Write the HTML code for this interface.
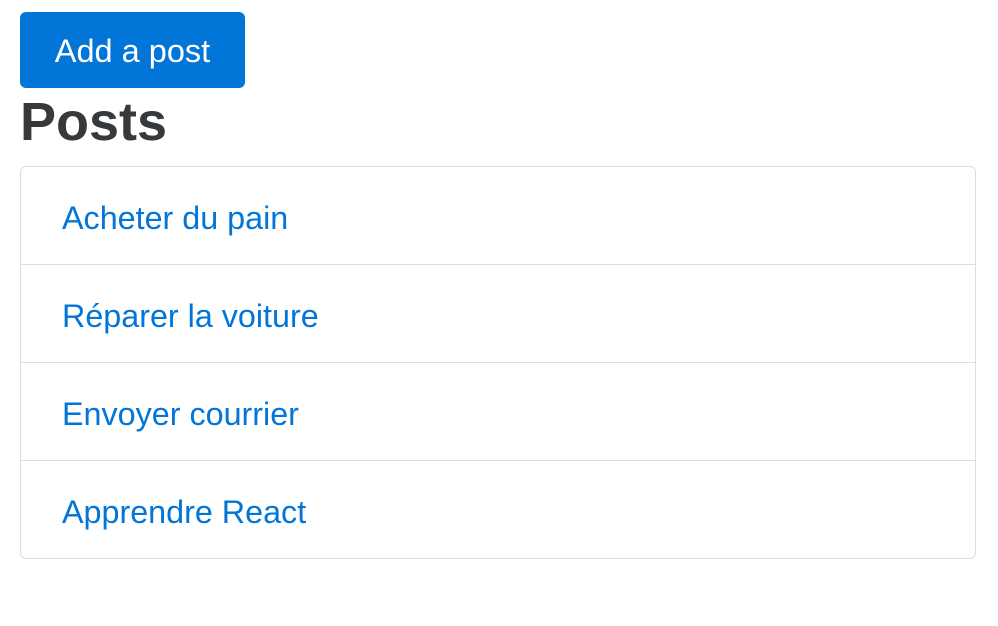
<!DOCTYPE html>
<html><head><meta charset="utf-8"><style>
body{margin:0;background:#fff;font-family:"Liberation Sans",sans-serif;}
.btn{position:absolute;left:20px;top:12px;width:225px;height:76px;background:#0275d8;border-radius:6px;color:#fff;font-size:32.5px;line-height:78px;text-align:center;}
h1{position:absolute;left:20px;top:88px;margin:0;font-size:54px;line-height:68px;font-weight:bold;color:#373a3c;}
.list{position:absolute;left:20px;top:166px;width:956px;height:393px;border:1px solid #ddd;border-radius:6px;box-sizing:border-box;}
.item{height:98px;border-bottom:1px solid #ddd;box-sizing:border-box;padding-left:41px;line-height:102px;font-size:32.3px;color:#0275d8;}
.item:last-child{border-bottom:none;}
</style></head><body>
<div class="btn">Add a post</div>
<h1>Posts</h1>
<div class="list">
<div class="item">Acheter du pain</div>
<div class="item">Réparer la voiture</div>
<div class="item">Envoyer courrier</div>
<div class="item">Apprendre React</div>
</div>
</body></html>
